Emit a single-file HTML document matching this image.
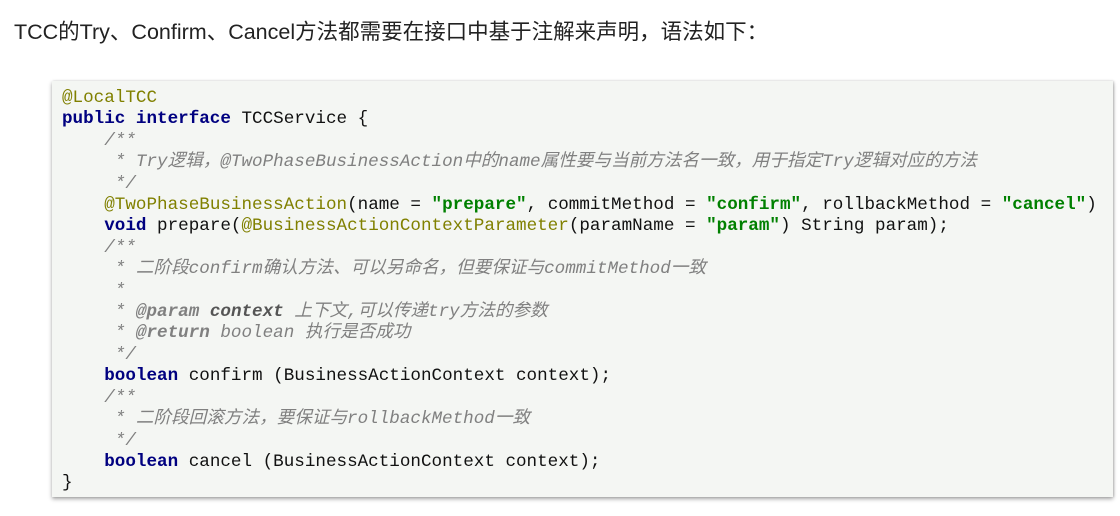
<!DOCTYPE html>
<html><head><meta charset="utf-8"><style>
body{margin:0;width:1120px;height:516px;background:#fff;overflow:hidden;position:relative;font-family:"Liberation Sans","Noto Sans CJK SC",sans-serif}
.t{position:absolute;left:14px;top:15px;font-size:21.5px;color:#222}
.box{position:absolute;left:52px;top:81px;width:1061px;height:416px;background:#f4f6f3;box-shadow:0 2px 4px rgba(0,0,0,.35),1px 0 2px rgba(0,0,0,.15)}
pre{margin:0;position:absolute;left:10px;top:7px;font-family:"Liberation Mono","Noto Sans CJK SC",monospace;font-size:17.6px;line-height:21.4px;color:#111}
.k{color:#000080;font-weight:bold}.a{color:#808000}.s{color:#008000;font-weight:bold}.c{color:#808080;font-style:italic}.cb{color:#808080;font-style:italic;font-weight:bold}
</style></head><body>
<div class="t">TCC的Try、Confirm、Cancel方法都需要在接口中基于注解来声明，语法如下：</div>
<div class="box"><pre><span class="a">@LocalTCC</span>
<span class="k">public interface</span> TCCService {
    <span class="c">/**
     * Try逻辑，@TwoPhaseBusinessAction中的name属性要与当前方法名一致，用于指定Try逻辑对应的方法
     */</span>
    <span class="a">@TwoPhaseBusinessAction</span>(name = <span class="s">"prepare"</span>, commitMethod = <span class="s">"confirm"</span>, rollbackMethod = <span class="s">"cancel"</span>)
    <span class="k">void</span> prepare(<span class="a">@BusinessActionContextParameter</span>(paramName = <span class="s">"param"</span>) String param);
    <span class="c">/**
     * 二阶段confirm确认方法、可以另命名，但要保证与commitMethod一致
     *
     * <span class="cb">@param</span> <span class="cb" style="color:#555">context</span> 上下文,可以传递try方法的参数
     * <span class="cb">@return</span> boolean 执行是否成功
     */</span>
    <span class="k">boolean</span> confirm (BusinessActionContext context);
    <span class="c">/**
     * 二阶段回滚方法，要保证与rollbackMethod一致
     */</span>
    <span class="k">boolean</span> cancel (BusinessActionContext context);
}</pre></div>
</body></html>
